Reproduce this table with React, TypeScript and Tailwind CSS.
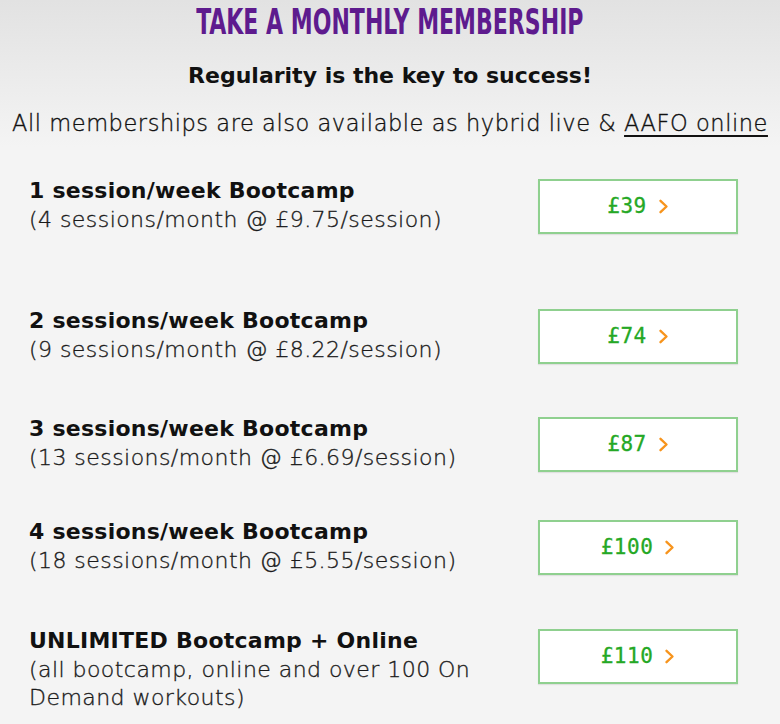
import React from 'react'

type Plan = {
  title: string
  lines: string[]
  price: string
  gap: string
}

const plans: Plan[] = [
  { title: '1 session/week Bootcamp', lines: ['(4 sessions/month @ £9.75/session)'], price: '£39', gap: 'mt-[30px]' },
  { title: '2 sessions/week Bootcamp', lines: ['(9 sessions/month @ £8.22/session)'], price: '£74', gap: 'mt-[73px]' },
  { title: '3 sessions/week Bootcamp', lines: ['(13 sessions/month @ £6.69/session)'], price: '£87', gap: 'mt-[51px]' },
  { title: '4 sessions/week Bootcamp', lines: ['(18 sessions/month @ £5.55/session)'], price: '£100', gap: 'mt-[46px]' },
  {
    title: 'UNLIMITED Bootcamp + Online',
    lines: ['(all bootcamp, online and over 100 On', 'Demand workouts)'],
    price: '£110',
    gap: 'mt-[52px]',
  },
]

function Chevron() {
  return (
    <svg width="11" height="15" viewBox="0 0 11 15" fill="none" className="shrink-0">
      <path d="M2.5 1.8 L8.5 7.5 L2.5 13.2" stroke="#f7941d" strokeWidth="2.4" strokeLinecap="round" strokeLinejoin="round" />
    </svg>
  )
}

function PlanRow({ plan }: { plan: Plan }) {
  return (
    <div className={`flex items-start justify-between pl-[29px] pr-[42px] ${plan.gap}`}>
      <div className="font-['DejaVu_Sans',sans-serif] leading-[28.5px]">
        <div className="font-bold text-[22px] tracking-[0.25px] text-[#111]">{plan.title}</div>
        {plan.lines.map((l) => (
          <div key={l} className="font-light text-[22px] tracking-[0.45px] text-[#1a1a1a] [-webkit-text-stroke:0.35px_#1a1a1a]">
            {l}
          </div>
        ))}
      </div>
      <button className="mt-[2px] flex h-[55px] w-[200px] shrink-0 items-center justify-center gap-[11px] border-2 border-[#8fd08f] bg-white shadow-[0_1px_1px_rgba(0,0,0,0.08)]">
        <span className="font-['DejaVu_Sans_Mono',monospace] text-[21px] text-[#25a825] tracking-[0.5px] [-webkit-text-stroke:0.3px_#25a825]">
          {plan.price}
        </span>
        <Chevron />
      </button>
    </div>
  )
}

export default function App() {
  return (
    <div className="min-h-[724px] w-[780px] bg-[#f4f4f4] overflow-hidden">
      <header className="bg-linear-to-b from-[#e2e2e2] to-[#f4f4f4] pt-[4px] pb-[10px] text-center">
        <h1 className="font-['DejaVu_Sans',sans-serif] font-stretch-condensed font-bold text-[36px] leading-[36px] text-[#5e1b8e]">
          <span className="inline-block scale-x-[0.68]">TAKE A MONTHLY MEMBERSHIP</span>
        </h1>
        <p className="mt-[24px] font-['DejaVu_Sans',sans-serif] font-bold text-[22px] leading-[24px] text-[#111]">
          Regularity is the key to success!
        </p>
        <p className="mt-[21px] font-['DejaVu_Sans',sans-serif] font-light text-[22.5px] leading-[28px] tracking-[0.55px] text-[#111] [-webkit-text-stroke:0.35px_#111]">
          All memberships are also available as hybrid live &amp;{' '}
          <a href="#" className="underline underline-offset-[4px] decoration-[1.5px]">AAFO online</a>
        </p>
      </header>
      <main className="pb-4">
        {plans.map((p) => (
          <PlanRow key={p.title} plan={p} />
        ))}
      </main>
    </div>
  )
}
